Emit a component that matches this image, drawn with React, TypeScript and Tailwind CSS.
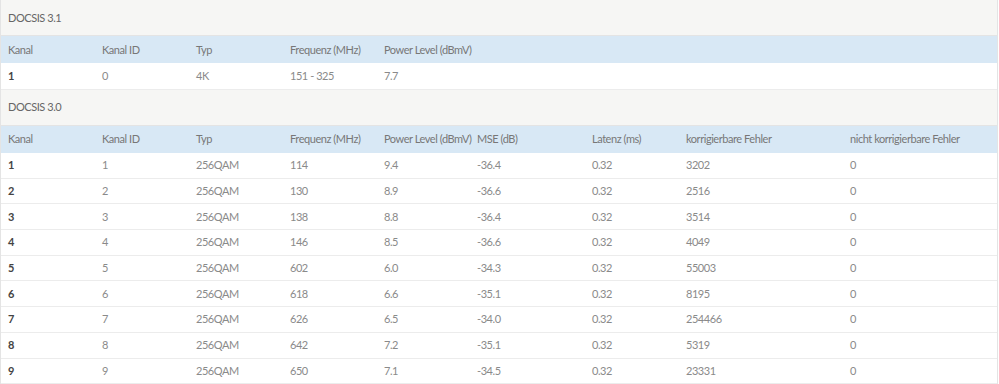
const cols = ["w-[94px]", "w-[94px]", "w-[94px]", "w-[94px]", "w-[93px]", "w-[115px]", "w-[94px]", "w-[164px]", ""];

const head31 = ["Kanal", "Kanal ID", "Typ", "Frequenz (MHz)", "Power Level (dBmV)"];
const rows31 = [["1", "0", "4K", "151 - 325", "7.7"]];

const head30 = [
  "Kanal",
  "Kanal ID",
  "Typ",
  "Frequenz (MHz)",
  "Power Level (dBmV)",
  "MSE (dB)",
  "Latenz (ms)",
  "korrigierbare Fehler",
  "nicht korrigierbare Fehler",
];

const rows30 = [
  ["1", "1", "256QAM", "114", "9.4", "-36.4", "0.32", "3202", "0"],
  ["2", "2", "256QAM", "130", "8.9", "-36.6", "0.32", "2516", "0"],
  ["3", "3", "256QAM", "138", "8.8", "-36.4", "0.32", "3514", "0"],
  ["4", "4", "256QAM", "146", "8.5", "-36.6", "0.32", "4049", "0"],
  ["5", "5", "256QAM", "602", "6.0", "-34.3", "0.32", "55003", "0"],
  ["6", "6", "256QAM", "618", "6.6", "-35.1", "0.32", "8195", "0"],
  ["7", "7", "256QAM", "626", "6.5", "-34.0", "0.32", "254466", "0"],
  ["8", "8", "256QAM", "642", "7.2", "-35.1", "0.32", "5319", "0"],
  ["9", "9", "256QAM", "650", "7.1", "-34.5", "0.32", "23331", "0"],
];

function Section({ title, head, rows, rowH }: { title: string; head: string[]; rows: string[][]; rowH: string }) {
  return (
    <>
      <div className="h-[36px] flex items-center px-[7px] bg-[#f6f6f4] border-b border-[#e4e4e4] text-[#666]">
        {title}
      </div>
      <table className="w-full table-fixed border-collapse">
        <colgroup>
          {cols.map((c, i) => (
            <col key={i} className={c} />
          ))}
        </colgroup>
        <thead>
          <tr className="h-[27px] bg-[#d8e8f5]">
            {head.map((h, i) => (
              <th key={i} className="p-0 pl-[7px] text-left font-normal text-[#777] whitespace-nowrap">
                {h}
              </th>
            ))}
            {head.length < cols.length && <th colSpan={cols.length - head.length} />}
          </tr>
        </thead>
        <tbody>
          {rows.map((r, i) => (
            <tr key={i} className={`${rowH} bg-white border-b border-[#ececec]`}>
              {r.map((v, j) => (
                <td
                  key={j}
                  className={`p-0 pl-[7px] whitespace-nowrap ${j === 0 ? "font-bold text-[#444]" : "text-[#8a8a8a]"}`}
                >
                  {v}
                </td>
              ))}
              {r.length < cols.length && <td colSpan={cols.length - r.length} />}
            </tr>
          ))}
        </tbody>
      </table>
    </>
  );
}

export default function App() {
  return (
    <div className="w-[998px] h-[384px] bg-white overflow-hidden text-[11px] leading-[14px] tracking-[-0.45px] border-x border-[#e4e4e4] font-['Lato','Liberation_Sans',sans-serif]">
      <Section title="DOCSIS 3.1" head={head31} rows={rows31} rowH="h-[26px]" />
      <Section title="DOCSIS 3.0" head={head30} rows={rows30} rowH="h-[25.7px]" />
    </div>
  );
}
